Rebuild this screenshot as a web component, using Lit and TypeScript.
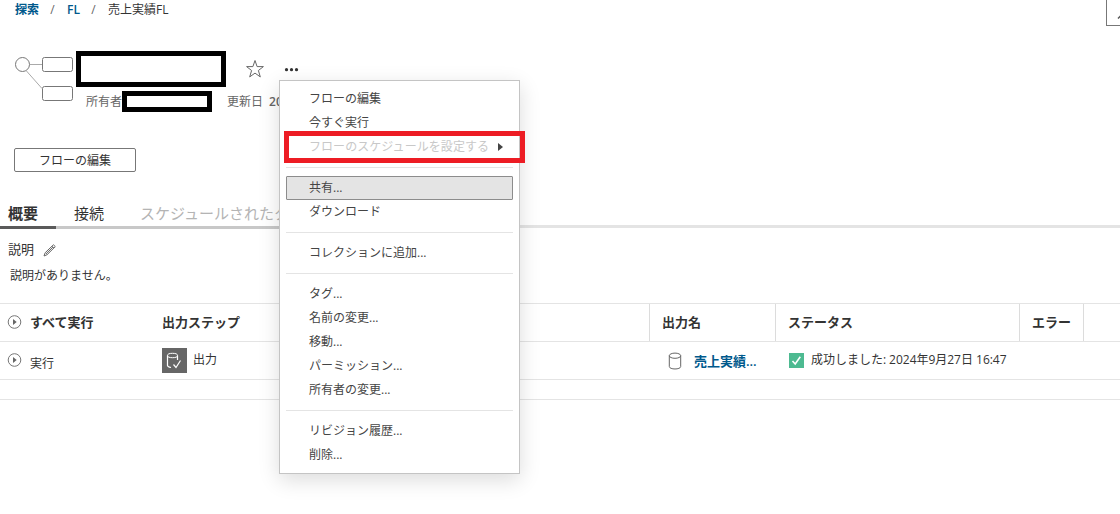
import { LitElement, html, css, nothing } from 'lit';
import { customElement } from 'lit/decorators.js';
import { classMap } from 'lit/directives/class-map.js';

interface MenuEntry {
  label: string;
  disabled?: boolean;
  active?: boolean;
}

const MENU_GROUPS: MenuEntry[][] = [
  [
    { label: 'フローの編集' },
    { label: '今すぐ実行' },
    { label: 'フローのスケジュールを設定する', disabled: true },
  ],
  [{ label: '共有...', active: true }, { label: 'ダウンロード' }],
  [{ label: 'コレクションに追加...' }],
  [
    { label: 'タグ...' },
    { label: '名前の変更...' },
    { label: '移動...' },
    { label: 'パーミッション...' },
    { label: '所有者の変更...' },
  ],
  [{ label: 'リビジョン履歴...' }, { label: '削除...' }],
];

@customElement('flow-menu')
export class FlowMenu extends LitElement {
  static styles = css`
    :host {
      display: block;
      box-sizing: border-box;
      width: 241px;
      height: 394px;
      padding: 6px;
      background: #fff;
      border: 1px solid #c4c4c4;
      box-shadow: 0 6px 20px rgba(0, 0, 0, 0.14);
      color: #444;
      font-size: 12px;
    }
    .group + .group {
      margin-top: 8px;
      padding-top: 8px;
      border-top: 1px solid #e4e4e4;
    }
    .item {
      box-sizing: border-box;
      display: flex;
      align-items: center;
      height: 24px;
      padding: 0 8px 0 22px;
      border: 1px solid transparent;
      border-radius: 1px;
      line-height: 22px;
      white-space: nowrap;
    }
    .active {
      background: #e4e4e4;
      border-color: #8c8c8c;
    }
    .disabled {
      position: relative;
      color: #c8c8c8;
    }
    .disabled .label {
      letter-spacing: 0.06px;
    }
    .arrow {
      margin-left: 9px;
    }
    .mark {
      position: absolute;
      inset: -5px -13px -5px -3px;
      border: 5px solid #ed1c24;
    }
  `;

  render() {
    return MENU_GROUPS.map(
      (group) => html`<div class="group">
        ${group.map(
          (item) => html`<div class=${classMap({ item: true, active: !!item.active, disabled: !!item.disabled })}>
            <span class="label">${item.label}</span>
            ${item.disabled
              ? html`<svg class="arrow" width="5" height="8" viewBox="0 0 5 8"><path d="M0 0L5 4L0 8Z" fill="#444" /></svg>
                  <span class="mark"></span>`
              : nothing}
          </div>`
        )}
      </div>`
    );
  }
}

@customElement('app-root')
export class AppRoot extends LitElement {
  static styles = css`
    :host {
      display: block;
      position: relative;
      width: 1120px;
      height: 514px;
      overflow: hidden;
      background: #fff;
      color: #333;
      font-family: 'Open Sans', 'Noto Sans CJK JP', sans-serif;
      font-size: 12px;
      line-height: 18px;
      white-space: nowrap;
    }
    svg {
      display: block;
      flex: none;
      fill: none;
    }
    .top {
      display: flex;
      justify-content: space-between;
      height: 50px;
    }
    .crumbs {
      display: flex;
      padding: 1px 0 0 15px;
    }
    .crumbs a {
      color: #00598c;
      font-weight: 600;
    }
    .slash {
      width: 27px;
      padding-right: 1px;
      text-align: center;
      color: #666;
    }
    .corner {
      box-sizing: border-box;
      width: 14px;
      height: 26px;
      padding: 14px 0 0 10px;
      border: solid #777;
      border-width: 0 0 1px 1px;
    }
    .header {
      display: flex;
      height: 98px;
      padding-left: 14px;
    }
    .flow {
      margin: 6px 3px 0 0;
    }
    .title {
      display: flex;
      height: 38px;
      padding-top: 1px;
    }
    .redacted {
      box-sizing: border-box;
      border: 5px solid #000;
    }
    .name {
      width: 150px;
      height: 36px;
    }
    .star {
      margin: 8px 0 0 19px;
    }
    .dots {
      margin: 17px 0 0 19px;
    }
    .meta {
      display: flex;
      height: 24px;
      padding: 2px 0 0 10px;
      color: #666;
    }
    .meta span {
      padding-top: 2px;
    }
    .owner {
      width: 90px;
      height: 21px;
      margin-right: 15px;
    }
    .meta .date {
      width: 10px;
      margin-left: 6px;
      overflow: hidden;
      font-weight: 600;
    }
    .edit {
      box-sizing: border-box;
      width: 122px;
      height: 24px;
      margin-left: 14px;
      border: 1px solid #777;
      border-radius: 2px;
      line-height: 23px;
      text-align: center;
    }
    .tabs {
      display: flex;
      width: 279px;
      height: 28px;
      margin-top: 28px;
      overflow: hidden;
      font-size: 15px;
      line-height: 26px;
    }
    .tab {
      padding: 0 18px;
    }
    .tabs .current {
      padding-left: 8px;
      font-weight: 700;
    }
    .tabs .future {
      flex: 1;
      min-width: 0;
      padding-right: 0;
      overflow: hidden;
      color: #b4b4b4;
    }
    .rule {
      display: flex;
      height: 3px;
      margin-top: -3px;
    }
    .on {
      width: 56px;
      height: 3px;
      margin-top: 1px;
      background: #5a5a5a;
    }
    .near {
      width: 224px;
      height: 3px;
      margin-top: 1px;
      background: #c8c8c8;
    }
    .far {
      flex: 1;
      background: #e4e4e4;
    }
    .about {
      height: 75px;
      padding-left: 8px;
    }
    .caption {
      display: flex;
      gap: 9px;
      padding-top: 12px;
      font-size: 13px;
    }
    .caption svg {
      margin-top: 3px;
    }
    .none {
      padding: 9px 0 0 2px;
    }
    .row {
      display: grid;
      grid-template-columns: 162px 487px 126px 244px 64px 1fr;
      height: 37px;
      border-top: 1px solid #e4e4e4;
    }
    .cell {
      display: flex;
      align-items: center;
    }
    .head {
      font-size: 13px;
      font-weight: 600;
      line-height: 16px;
    }
    .head .col {
      padding-left: 12px;
      border-left: 1px solid #dcdcdc;
    }
    .run {
      gap: 8px;
      padding-left: 7px;
    }
    .head .text {
      padding-bottom: 2px;
    }
    .body .run span {
      padding-top: 7px;
    }
    .step {
      gap: 6px;
    }
    .step span {
      padding-bottom: 2px;
    }
    .output {
      gap: 12px;
      padding-left: 19px;
      color: #00598c;
      font-size: 13px;
      font-weight: 600;
    }
    .output span {
      padding-top: 1px;
    }
    .status {
      gap: 7px;
      padding-left: 14px;
      letter-spacing: -0.02px;
    }
    .status span {
      padding-bottom: 2px;
    }
    .foot {
      height: 19px;
      border: solid #e4e4e4;
      border-width: 1px 0;
    }
    .menu {
      position: absolute;
      left: 279px;
      top: 80px;
    }
  `;

  private play() {
    return html`<svg width="15" height="15" viewBox="0 0 15 15">
      <circle cx="7.5" cy="7" r="6.3" stroke="#777" />
      <path d="M6 4L9.7 7L6 10Z" fill="#666" />
    </svg>`;
  }

  render() {
    return html`
      <div class="top">
        <nav class="crumbs">
          <a>探索</a><span class="slash">/</span><a>FL</a><span class="slash">/</span><span>売上実績FL</span>
        </nav>
        <div class="corner">
          <svg width="5" height="5" viewBox="0 0 5 5"><path d="M1 4.5L5 .5" stroke="#555" stroke-width="1.5" /></svg>
        </div>
      </div>

      <header class="header">
        <svg class="flow" width="59" height="46" viewBox="0 0 59 46">
          <path d="M16 8.5H28M12.5 15L28 32.5" stroke="#aaa" />
          <g stroke="#777">
            <circle cx="8.5" cy="8.5" r="7" />
            <rect x="28.5" y="1.5" width="30" height="14" rx="2" />
            <rect x="28.5" y="30.5" width="30" height="14" rx="2" />
          </g>
        </svg>
        <div>
          <div class="title">
            <div class="redacted name"></div>
            <svg class="star" width="20" height="20" viewBox="0 0 20 20">
              <path d="M10 1.5L12.1 7.6H18.4L13.4 11.5L15.3 17.9L10 14.1L4.7 17.9L6.6 11.5L1.6 7.6H7.9Z" stroke="#666" />
            </svg>
            <svg class="dots" width="15" height="4" viewBox="0 0 15 4">
              <g fill="#333"><circle cx="2.5" cy="1.7" r="1.6" /><circle cx="7.5" cy="1.7" r="1.6" /><circle cx="12.5" cy="1.7" r="1.6" /></g>
            </svg>
          </div>
          <div class="meta">
            <span>所有者</span>
            <div class="redacted owner"></div>
            <span>更新日</span><span class="date">20</span>
          </div>
        </div>
      </header>

      <div class="edit">フローの編集</div>

      <nav class="tabs">
        <span class="tab current">概要</span><span class="tab">接続</span><span class="tab future">スケジュールされたタ</span>
      </nav>
      <div class="rule"><div class="on"></div><div class="near"></div><div class="far"></div></div>

      <section class="about">
        <div class="caption">
          <span>説明</span>
          <svg width="14" height="14" viewBox="0 0 14 14">
            <path d="M1 13L2.2 9.7L10.4 1.8L12.3 3.6L4.1 11.7ZM9 3.2L10.8 5M3 10.9L9.9 4.1" stroke="#666" />
          </svg>
        </div>
        <div class="none">説明がありません。</div>
      </section>

      <div class="row head">
        <div class="cell run">${this.play()}<span class="text">すべて実行</span></div>
        <div class="cell"><span class="text">出力ステップ</span></div>
        <div class="cell col"><span class="text">出力名</span></div>
        <div class="cell col"><span class="text">ステータス</span></div>
        <div class="cell col"><span class="text">エラー</span></div>
        <div class="cell col"></div>
      </div>
      <div class="row body">
        <div class="cell run">${this.play()}<span>実行</span></div>
        <div class="cell step">
          <svg width="25" height="25" viewBox="0 0 25 25">
            <rect width="25" height="25" fill="#666" />
            <path d="M9 19.5C6.8 19.1 5.5 18.3 5.5 17.5V7.5M15.5 7.5V12M11.5 16.5L14 19.5L18.5 12.5" stroke="#fff" stroke-width="1.2" />
            <ellipse cx="10.5" cy="7.5" rx="5" ry="2.2" stroke="#fff" />
          </svg>
          <span>出力</span>
        </div>
        <div class="cell output">
          <svg width="14" height="18" viewBox="0 0 14 18">
            <g stroke="#666"><ellipse cx="7" cy="3.7" rx="5.7" ry="2.6" /><path d="M1.3 3.7V14.5C1.3 17.8 12.7 17.8 12.7 14.5V3.7" /></g>
          </svg>
          <span>売上実績...</span>
        </div>
        <div class="cell status">
          <svg width="15" height="15" viewBox="0 0 15 15">
            <rect width="15" height="15" fill="#4dba91" />
            <path d="M3.5 8L6.2 11L11.3 3.8" stroke="#fff" stroke-width="1.6" />
          </svg>
          <span>成功しました: 2024年9月27日 16:47</span>
        </div>
      </div>
      <div class="foot"></div>

      <flow-menu class="menu"></flow-menu>
    `;
  }
}
